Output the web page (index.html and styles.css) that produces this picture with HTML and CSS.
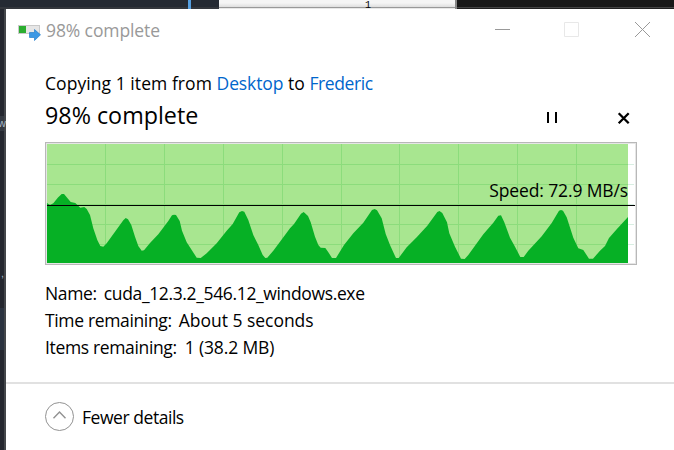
FILE: index.html
```html
<!DOCTYPE html>
<html lang="en">
<head>
<meta charset="utf-8">
<title>98% complete</title>
<link rel="stylesheet" href="styles.css">
</head>
<body>
<div class="desktop">
  <div class="behind-top"><i class="accent"></i><i class="page"></i><i class="dark"></i><span class="page-mark">1</span></div>
  <div class="behind-left"><i class="row row-a"></i><i class="row row-b"></i><span class="code code-a">w</span><span class="code code-b">,</span></div>
  <main class="window">
    <header class="titlebar">
      <svg class="app-icon" width="24" height="18" viewBox="0 0 24 18">
        <path d="M0 0h22v9H0z" fill="#c9c9c9"/><path d="M1 1h20v7H1z" fill="#e6e6e6"/><path d="M1 1h7v7H1z" fill="#2bad2f"/>
        <path d="M11.500 7.500h5V4.500l6 5.300-6 5.700v-3h-5z" fill="#3c98e4" stroke="#2580cb" stroke-width=".7"/>
      </svg>
      <span class="title">98% complete</span>
      <svg class="controls" width="157" height="16" viewBox="0 0 157 16" fill="none">
        <path d="M0 7.500h15" stroke="#999"/><path d="M69.500.500h14v14h-14z" stroke="#e8e8e8"/><path d="M140 0l15 15m0-15l-15 15" stroke="#999"/>
      </svg>
    </header>
    <section class="body">
      <p class="summary">Copying 1 item from <a>Desktop</a> to <a class="target">Frederic</a></p>
      <div class="status">
        <h1>98% complete</h1>
        <svg class="actions" width="83" height="12" viewBox="0 0 83 12">
          <path d="M0 0h2v11H0zM8 0h2v11H8z"/><path d="M71.700 1.200l10 10m0-10l-10 10" stroke="#000" stroke-width="2.300"/>
        </svg>
      </div>
      <div class="chart">
        <svg width="588" height="119" viewBox="47 144 588 119">
          <path d="M47 164.500H634M47 184.500H634M47 204.500H634M47 224.500H634M47 244.500H634" stroke="#d8eee2"/>
          <path d="M47 144h581v119H47z" fill="#a8e690"/>
          <path d="M47 164.500H628M47 184.500H628M47 204.500H628M47 224.500H628M47 244.500H628M105.500 144v119M164.500 144v119M223.500 144v119M282.500 144v119M341.500 144v119M399.500 144v119M458.500 144v119M517.500 144v119M576.500 144v119" stroke="#8cdc7c"/>
          <path fill="#06b025" d="M47 263V203L50 205 53.300 203.300 58 197.500 61.700 194H64L70.700 202 75.300 203 80.300 207.700 84.300 207 86.700 209 90 215 93.300 228.300 97.300 240 100.300 246 103.300 246.700 106.700 243.300 115 231.700 123.300 220.300 125.700 218 128 219.300 131.300 225 135 236.700 138.300 246 141.700 250.700 144 250.300 150 243 158.300 234.300 168.300 221 172 215.300 174 214.700 176 215 179.700 221 182 230.700 186.700 242.300 191.700 250 196.700 257.700 200.700 258 206.700 253.300 216.700 243.300 226.700 230.700 232.700 224 239.300 212.300 242 211 244.300 211.700 248.300 220 253.300 235 258.300 245 262.700 255 265.300 258 267.300 257.700 273.300 250.700 280 241.700 290 228.300 294 224 301 213.700 303.700 212 308 216 310.700 222.300 315 236.700 318.300 245 320.700 247.700 325.300 248 328 251.700 332 258H336L344 245 353.300 233.300 363.300 222.700 372 210 374.700 209 377 210.300 381.700 218.300 385.700 234 390 245 395 256 396 258H398.700L406.700 247.300 416.700 237.300 427.300 225.700 437.300 212 439.500 211 442.300 213 447 222.300 449.300 233.300 455 246.700 461 258.700 464.700 259 468.300 255 483.300 234.300 493.300 222.700 498.300 215.700 501 215.300 504.300 222.300 510 237.700 515 246.700 520.300 257H523.700L528.300 250.700 541.700 236.300 551.700 223 559 210.700 561 210 563 210.700 566.700 217.300 573.300 237.700 578.300 248.300 583.300 250 589 258.700H593L600 250.700 605 246 609 238 616.700 229.300 628 217V263z"/>
          <path d="M47 205.500H635" stroke="#000"/>
        </svg>
        <span class="speed">Speed: 72.9 MB/s</span>
      </div>
      <dl class="details">
        <div class="name"><dt>Name:</dt><dd>cuda_12.3.2_546.12_windows.exe</dd></div>
        <div class="time"><dt>Time remaining:</dt><dd>About 5 seconds</dd></div>
        <div class="items"><dt>Items remaining:</dt><dd>1 (38.2 MB)</dd></div>
      </dl>
    </section>
    <footer class="footer">
      <svg width="30" height="30" viewBox="0 0 30 30" fill="none" stroke="#929292"><circle cx="14.500" cy="14.500" r="14"/><path d="M8.500 16.300l6-6.300 6 6.300" stroke-width="1.400"/></svg>
      <span>Fewer details</span>
    </footer>
  </main>
</div>
</body>
</html>
```
FILE: styles.css
```css
* { box-sizing: border-box; margin: 0; padding: 0; }
body { width: 674px; height: 450px; overflow: hidden; font-family: "Open Sans", "Noto Sans", sans-serif; font-size: 17.5px; color: #000; }
.desktop { display: grid; grid-template: 9px 441px / 6px 668px; width: 674px; height: 450px; background: #24272f; }
.behind-top { grid-column: 1 / 3; position: relative; display: flex; background: #252a33; box-shadow: inset 0 -2px #34373d; }
.accent { width: 3px; margin-left: 188px; background: #569fe0; }
.page { width: 238px; margin-left: 28px; background: linear-gradient(#f5f5f5 0 3px, #dedede 7px, #999 7px 8px, #e8e8e8 8px); border-right: 2px solid #888; }
.dark { flex: 1; background: linear-gradient(#181818 7px, #444 7px 8px, #202020 8px); }
.page-mark { position: absolute; left: 365px; top: 1px; font: 10px/9px "Liberation Mono", monospace; }
.behind-left { position: relative; background: #24272f; border-right: 2px solid #44474b; }
.row { position: absolute; left: 0; width: 4px; }
.row-a { top: 107px; height: 15px; background: #343941; }
.row-b { top: 299px; height: 42px; background: #2b3340; }
.code { position: absolute; font: 11px/15px "Liberation Sans", sans-serif; color: #a9bac8; }
.code-a { left: -2px; top: 107px; }
.code-b { left: 1px; top: 257px; }
.window { background: #fff; display: flex; flex-direction: column; position: relative; }
.titlebar { height: 43px; display: flex; padding-left: 12px; color: #999; }
.app-icon { margin-top: 16px; }
.title { margin-left: 4px; line-height: 43px; letter-spacing: -.1px; }
.controls { margin: 13px 22px 0 auto; }
.body { height: 330px; padding: 0 37px 0 39px; }
.summary { padding-top: 18px; line-height: 26px; letter-spacing: .06px; white-space: nowrap; }
a { color: #0066cc; letter-spacing: -.1px; }
.target { letter-spacing: -.4px; }
.status { height: 46px; display: flex; justify-content: space-between; }
h1 { font-size: 23.3px; font-weight: 400; line-height: 39px; white-space: nowrap; }
.actions { margin: 16px 7px 0 0; }
.chart { position: relative; width: 592px; height: 123px; border: 1px solid #b8b8b8; padding: 1px; background: #e6e6e6; }
.chart svg { display: block; background: #fff; }
.speed { position: absolute; right: 8px; top: 34px; line-height: 26px; letter-spacing: -.13px; white-space: nowrap; }
.details { padding-top: 15px; }
.details div { display: flex; gap: 7px; height: 27px; line-height: 26px; white-space: nowrap; }
dt { letter-spacing: -.35px; }
.name dd { letter-spacing: -.36px; }
.time dd { letter-spacing: -.02px; }
.items dd { margin-left: 1px; letter-spacing: -.15px; }
.footer { flex: 1; border-top: 2px solid #e1e1e1; display: flex; gap: 7px; padding: 18px 0 0 39px; line-height: 30px; letter-spacing: -.45px; }
```
